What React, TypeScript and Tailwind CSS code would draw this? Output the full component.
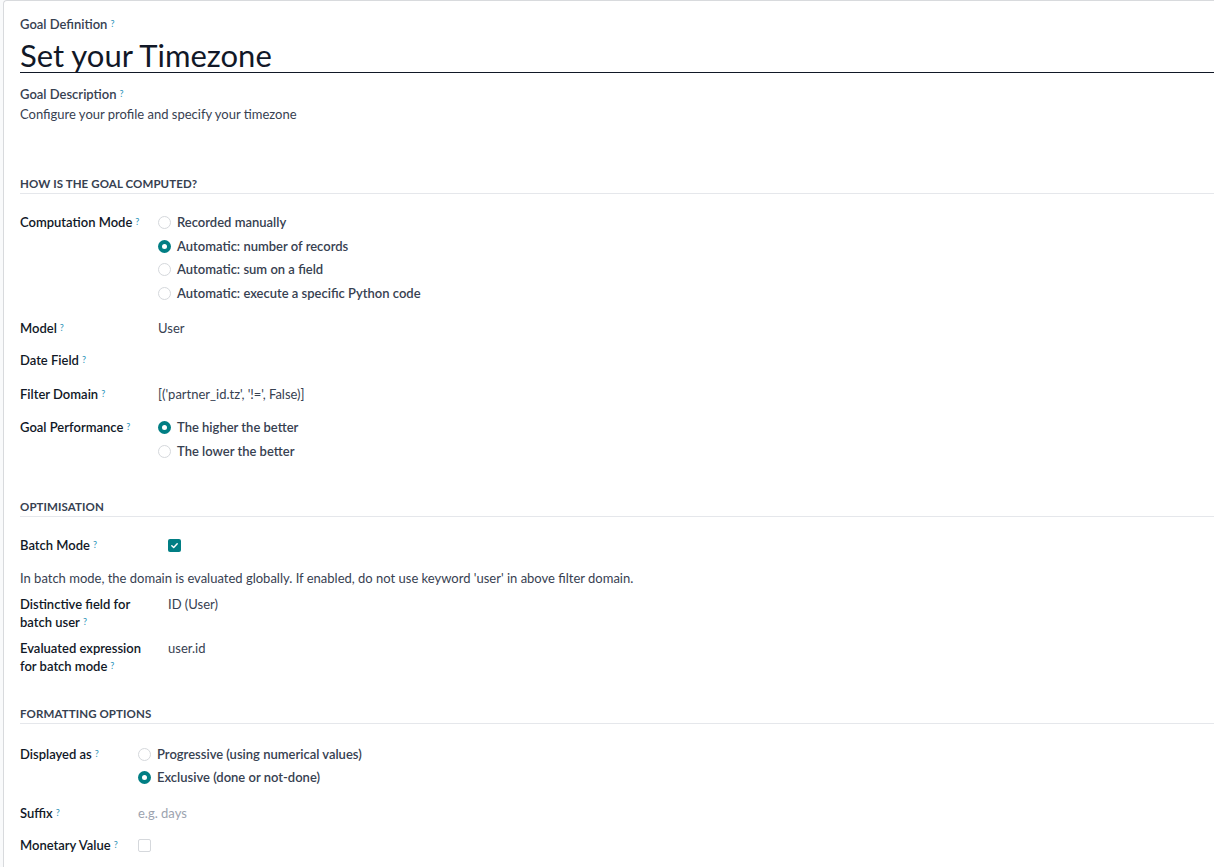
import React from "react";

const Q = () => (
  <sup className="ml-[3px] text-[9px] font-normal text-[#2a93b8] relative top-[-2px]">?</sup>
);

const Radio = ({ checked }: { checked?: boolean }) =>
  checked ? (
    <span className="w-[13px] h-[13px] rounded-full bg-[#017e84] flex items-center justify-center shrink-0">
      <span className="w-[5px] h-[5px] rounded-full bg-white" />
    </span>
  ) : (
    <span className="w-[13px] h-[13px] rounded-full border border-[#d5d8dc] bg-white shrink-0" />
  );

const RadioLine = ({ checked, children }: { checked?: boolean; children: React.ReactNode }) => (
  <div className="h-[23.5px] flex items-center gap-[6px]">
    <Radio checked={checked} />
    <span className="font-semibold text-[#374151]">{children}</span>
  </div>
);

const Header = ({ children, mt }: { children: React.ReactNode; mt: string }) => (
  <div className={`${mt} h-[19px] leading-[18px] border-b border-[#e5e7eb] text-[11.5px] font-bold uppercase text-[#374151] tracking-[0.1px]`}>
    {children}
  </div>
);

export default function App() {
  return (
    <div
      className="min-h-[867px] bg-[#f9fafb] pl-[3px] text-[13px] text-[#374151]"
      style={{ fontFamily: "Lato, 'Noto Sans', sans-serif" }}
    >
      <div className="min-h-[867px] bg-white border-l border-t border-[#d8dadd] rounded-tl-[4px] pl-[16px] pt-[13px]">
        {/* Title block */}
        <div className="h-[20px] leading-[20px] font-semibold text-[#374151]">
          Goal Definition<Q />
        </div>
        <div className="mt-[3px] h-[36px] leading-[36px] border-b border-[#111827] text-[31px] text-[#111827]">
          Set your Timezone
        </div>
        <div className="mt-[11px] h-[20px] leading-[20px] font-semibold text-[#374151]">
          Goal Description<Q />
        </div>
        <div className="h-[20px] leading-[20px] text-[#374151]">
          Configure your profile and specify your timezone
        </div>

        {/* Section 1 */}
        <Header mt="mt-[51px]">How is the goal computed?</Header>

        <div className="mt-[17px] flex">
          <div className="w-[138px] h-[23.5px] flex items-center font-semibold text-[#111827]">
            <span>Computation Mode<Q /></span>
          </div>
          <div className="flex flex-col">
            <RadioLine>Recorded manually</RadioLine>
            <RadioLine checked>Automatic: number of records</RadioLine>
            <RadioLine>Automatic: sum on a field</RadioLine>
            <RadioLine>Automatic: execute a specific Python code</RadioLine>
          </div>
        </div>

        <div className="mt-[12px] flex h-[23.5px] items-center">
          <div className="w-[138px] font-semibold text-[#111827]">
            Model<Q />
          </div>
          <div>User</div>
        </div>

        <div className="mt-[8.5px] flex h-[23.5px] items-center">
          <div className="w-[138px] font-semibold text-[#111827]">
            Date Field<Q />
          </div>
          <div />
        </div>

        <div className="mt-[10.5px] flex h-[23.5px] items-center">
          <div className="w-[138px] font-semibold text-[#111827]">
            Filter Domain<Q />
          </div>
          <div>[('partner_id.tz', '!=', False)]</div>
        </div>

        <div className="mt-[9.5px] flex">
          <div className="w-[138px] h-[23.5px] flex items-center font-semibold text-[#111827]">
            <span>Goal Performance<Q /></span>
          </div>
          <div className="flex flex-col">
            <RadioLine checked>The higher the better</RadioLine>
            <RadioLine>The lower the better</RadioLine>
          </div>
        </div>

        {/* Section 2 */}
        <Header mt="mt-[34.5px]">Optimisation</Header>

        <div className="mt-[17.25px] flex h-[23.5px] items-center">
          <div className="w-[148px] font-semibold text-[#111827]">
            Batch Mode<Q />
          </div>
          <span className="w-[13px] h-[13px] rounded-[2px] bg-[#017e84] flex items-center justify-center">
            <svg width="9" height="9" viewBox="0 0 10 10" fill="none">
              <path d="M2 5.2 L4.1 7.2 L8 3" stroke="white" strokeWidth="1.6" strokeLinecap="round" strokeLinejoin="round" />
            </svg>
          </span>
        </div>

        <div className="mt-[9.5px] h-[23.5px] leading-[23.5px] text-[#374151]">
          In batch mode, the domain is evaluated globally. If enabled, do not use keyword 'user' in above filter domain.
        </div>

        <div className="mt-[4.5px] flex">
          <div className="w-[148px] leading-[18px] font-semibold text-[#111827]">
            Distinctive field for
            <br />
            batch user<Q />
          </div>
          <div className="leading-[18px]">ID (User)</div>
        </div>

        <div className="mt-[8px] flex">
          <div className="w-[148px] leading-[18.5px] font-semibold text-[#111827]">
            Evaluated expression
            <br />
            for batch mode<Q />
          </div>
          <div className="leading-[18.5px]">user.id</div>
        </div>

        {/* Section 3 */}
        <Header mt="mt-[29.5px]">Formatting options</Header>

        <div className="mt-[18.25px] flex">
          <div className="w-[118px] h-[23.5px] flex items-center font-semibold text-[#111827]">
            <span>Displayed as<Q /></span>
          </div>
          <div className="flex flex-col">
            <RadioLine>Progressive (using numerical values)</RadioLine>
            <RadioLine checked>Exclusive (done or not-done)</RadioLine>
          </div>
        </div>

        <div className="mt-[12px] flex h-[23.5px] items-center">
          <div className="w-[118px] font-semibold text-[#111827]">
            Suffix<Q />
          </div>
          <div className="text-[#9ca3af]">e.g. days</div>
        </div>

        <div className="mt-[8.5px] flex h-[23.5px] items-center">
          <div className="w-[118px] font-semibold text-[#111827]">
            Monetary Value<Q />
          </div>
          <span className="w-[13px] h-[13px] rounded-[2px] border border-[#d5d8dc] bg-white" />
        </div>
      </div>
    </div>
  );
}
